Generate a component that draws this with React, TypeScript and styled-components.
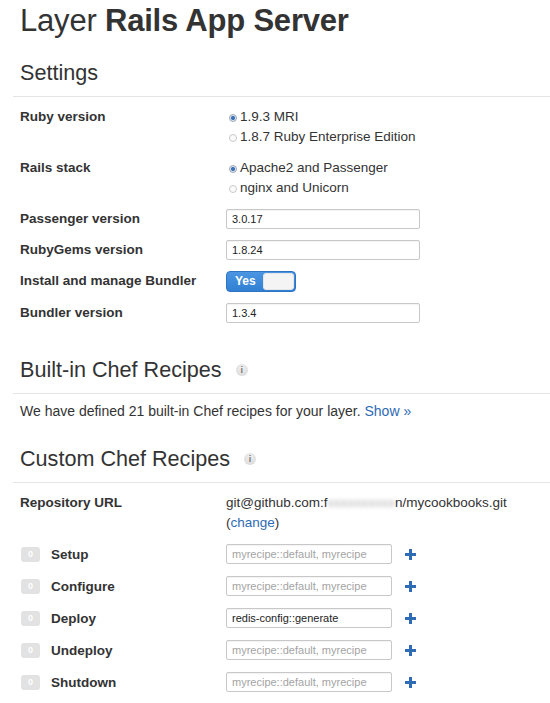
import React from "react";
import styled, { createGlobalStyle } from "styled-components";

const GlobalStyle = createGlobalStyle`
  html, body { margin: 0; padding: 0; background: #ffffff; }
  body {
    font-family: "Liberation Sans", Arial, Helvetica, sans-serif;
    color: #333333;
    -webkit-font-smoothing: antialiased;
  }
  * { box-sizing: border-box; }
`;

const Page = styled.div`
  width: 550px;
  height: 703px;
  overflow: hidden;
  padding: 4px 0 0 13px;
  display: flex;
  flex-direction: column;
`;

const Title = styled.h1`
  margin: 0;
  padding-left: 7px;
  font-size: 31px;
  line-height: 34px;
  font-weight: 400;
  color: #333333;
  letter-spacing: -0.2px;
  white-space: nowrap;
  b { font-weight: 700; }
`;

const Section = styled.section<{ $mt: number }>`
  margin-top: ${(p) => p.$mt}px;
  display: flex;
  flex-direction: column;
`;

const Heading = styled.h2`
  margin: 0;
  padding: 0 0 11px 7px;
  border-bottom: 1px solid #e4e4e4;
  font-size: 21.6px;
  line-height: 24px;
  font-weight: 400;
  color: #333333;
  display: flex;
  align-items: center;
`;

const InfoIcon = styled.span`
  display: inline-flex;
  align-items: center;
  justify-content: center;
  width: 12px;
  height: 12px;
  margin-left: 14px;
  border-radius: 50%;
  background: radial-gradient(circle at 50% 35%, #f0f0f0, #d6d6d6);
  color: #777777;
  font-size: 9px;
  line-height: 12px;
  font-weight: 700;
`;

const FormGrid = styled.div`
  display: grid;
  grid-template-columns: 206px 1fr;
  row-gap: 11px;
  padding: 10px 0 0 7px;
  align-items: start;
`;

const Label = styled.div`
  font-size: 13.5px;
  line-height: 20px;
  font-weight: 700;
  color: #333333;
  white-space: nowrap;
`;

const Value = styled.div`
  display: flex;
  flex-direction: column;
  font-size: 13.5px;
  line-height: 20px;
  color: #333333;
  white-space: nowrap;
`;

const RadioOption = styled.div`
  display: flex;
  align-items: center;
  height: 20px;
`;

const RadioDot = styled.span<{ $on?: boolean }>`
  width: 8px;
  height: 8px;
  margin: 1px 3px 0 3px;
  border-radius: 50%;
  border: 1px solid ${(p) => (p.$on ? "#9aa6b4" : "#c9c9c9")};
  background: ${(p) =>
    p.$on
      ? "radial-gradient(circle, #3f74b8 0 1.7px, #e3e8ee 2.4px)"
      : "#fbfbfb"};
`;

const TextInput = styled.input<{ $w: number }>`
  width: ${(p) => p.$w}px;
  height: 20px;
  margin: 0;
  padding: 0 5px;
  border: 1px solid #c8c8c8;
  border-radius: 2px;
  box-shadow: inset 0 1px 1px rgba(0, 0, 0, 0.05);
  font-family: "Liberation Sans", Arial, sans-serif;
  font-size: 11px;
  color: #222222;
  background: #ffffff;
  outline: none;
  &::placeholder { color: #a3a3a3; }
`;

const Toggle = styled.div`
  width: 70px;
  height: 21px;
  display: flex;
  align-items: center;
  justify-content: space-between;
  padding: 0 1px 0 8px;
  border: 1px solid #2d74c4;
  border-radius: 4px;
  background: linear-gradient(#4b95e2, #3180d3);
`;

const ToggleText = styled.span`
  color: #ffffff;
  font-size: 12px;
  font-weight: 700;
  line-height: 19px;
`;

const Knob = styled.span`
  width: 31px;
  height: 17px;
  border-radius: 4px;
  background: #f4f4f4;
  box-shadow: inset 0 0 0 1px #e6e6e6;
`;

const Paragraph = styled.p`
  margin: 0;
  padding: 7px 0 0 7px;
  font-size: 14px;
  line-height: 20px;
  color: #333333;
  white-space: nowrap;
`;

const Link = styled.a`
  color: #2d6bb4;
  text-decoration: none;
`;

const Blurred = styled.span`
  color: transparent;
  text-shadow: 0 0 4px rgba(0, 0, 0, 0.3);
`;

const RecipeList = styled.div`
  display: flex;
  flex-direction: column;
  gap: 12px;
  padding: 11px 0 0 7px;
`;

const RecipeRow = styled.div`
  display: grid;
  grid-template-columns: 31px 175px 166px auto;
  align-items: center;
  height: 20px;
`;

const Badge = styled.span`
  width: 19px;
  height: 15px;
  margin-left: 1px;
  border-radius: 3px;
  background: #e2e2e2;
  color: #ffffff;
  font-size: 9px;
  font-weight: 700;
  line-height: 15px;
  text-align: center;
`;

const RecipeLabel = styled.span`
  font-size: 13.5px;
  font-weight: 700;
  color: #333333;
`;

const AddButton = styled.span`
  display: flex;
  margin-left: 13px;
  width: 11px;
  height: 11px;
`;

const PlusIcon = () => (
  <svg width="11" height="11" viewBox="0 0 11 11">
    <rect x="0" y="4" width="11" height="3" fill="#2e6db6" />
    <rect x="4" y="0" width="3" height="11" fill="#2e6db6" />
  </svg>
);

const recipes: { name: string; value?: string }[] = [
  { name: "Setup" },
  { name: "Configure" },
  { name: "Deploy", value: "redis-config::generate" },
  { name: "Undeploy" },
  { name: "Shutdown" },
];

export default function App() {
  return (
    <>
      <GlobalStyle />
      <Page>
        <Title>
          Layer <b>Rails App Server</b>
        </Title>

        <Section $mt={23}>
          <Heading>Settings</Heading>
          <FormGrid>
            <Label>Ruby version</Label>
            <Value>
              <RadioOption>
                <RadioDot $on />
                1.9.3 MRI
              </RadioOption>
              <RadioOption>
                <RadioDot />
                1.8.7 Ruby Enterprise Edition
              </RadioOption>
            </Value>

            <Label>Rails stack</Label>
            <Value>
              <RadioOption>
                <RadioDot $on />
                Apache2 and Passenger
              </RadioOption>
              <RadioOption>
                <RadioDot />
                nginx and Unicorn
              </RadioOption>
            </Value>

            <Label>Passenger version</Label>
            <Value>
              <TextInput $w={194} defaultValue="3.0.17" />
            </Value>

            <Label>RubyGems version</Label>
            <Value>
              <TextInput $w={194} defaultValue="1.8.24" />
            </Value>

            <Label>Install and manage Bundler</Label>
            <Value>
              <Toggle>
                <ToggleText>Yes</ToggleText>
                <Knob />
              </Toggle>
            </Value>

            <Label>Bundler version</Label>
            <Value>
              <TextInput $w={194} defaultValue="1.3.4" />
            </Value>
          </FormGrid>
        </Section>

        <Section $mt={35}>
          <Heading>
            Built-in Chef Recipes
            <InfoIcon>i</InfoIcon>
          </Heading>
          <Paragraph>
            We have defined 21 built-in Chef recipes for your layer.{" "}
            <Link href="#">Show »</Link>
          </Paragraph>
        </Section>

        <Section $mt={26}>
          <Heading>
            Custom Chef Recipes
            <InfoIcon>i</InfoIcon>
          </Heading>
          <FormGrid>
            <Label>Repository URL</Label>
            <Value>
              <span>
                git@github.com:f<Blurred>xxxxxxxxxx</Blurred>n/mycookbooks.git
              </span>
              <span>
                (<Link href="#">change</Link>)
              </span>
            </Value>
          </FormGrid>
          <RecipeList>
            {recipes.map((r) => (
              <RecipeRow key={r.name}>
                <Badge>0</Badge>
                <RecipeLabel>{r.name}</RecipeLabel>
                <TextInput
                  $w={166}
                  defaultValue={r.value ?? ""}
                  placeholder="myrecipe::default, myrecipe"
                />
                <AddButton>
                  <PlusIcon />
                </AddButton>
              </RecipeRow>
            ))}
          </RecipeList>
        </Section>
      </Page>
    </>
  );
}
